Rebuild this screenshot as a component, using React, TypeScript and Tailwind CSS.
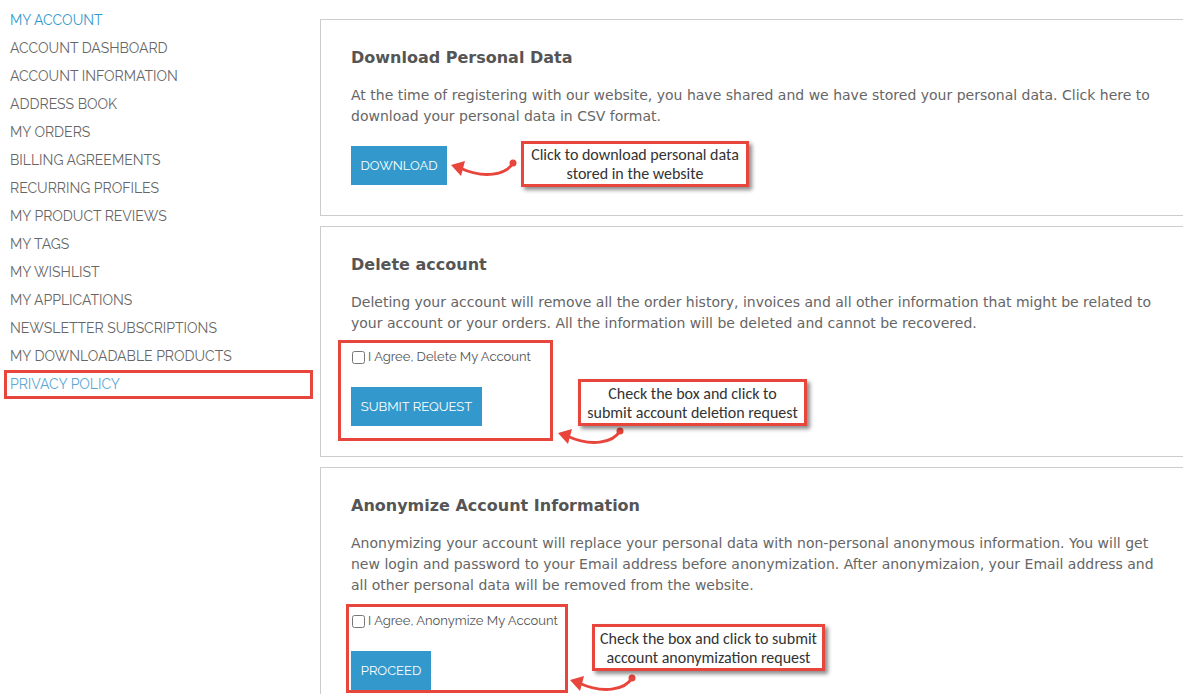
import { ReactNode } from "react";

const NAV = [
  "ACCOUNT DASHBOARD",
  "ACCOUNT INFORMATION",
  "ADDRESS BOOK",
  "MY ORDERS",
  "BILLING AGREEMENTS",
  "RECURRING PROFILES",
  "MY PRODUCT REVIEWS",
  "MY TAGS",
  "MY WISHLIST",
  "MY APPLICATIONS",
  "NEWSLETTER SUBSCRIPTIONS",
  "MY DOWNLOADABLE PRODUCTS",
];

const raleway = "font-['Raleway','Lato','Open_Sans',sans-serif]";
const verdana = "font-['Verdana','DejaVu_Sans',sans-serif]";
const calibri = "font-['Calibri','Carlito','Lato',sans-serif]";

// red annotation arrow: dot on the right, head on the left
function Arrow({ className }: { className: string }) {
  return (
    <svg className={`absolute ${className}`} width="72" height="28" viewBox="0 0 72 28" fill="none">
      <path d="M65 8 C 58 20, 36 24, 12 13" stroke="#e8463c" strokeWidth="3" strokeLinecap="round" />
      <circle cx="65" cy="8" r="3.5" fill="#e8463c" />
      <polygon points="3,10 17,6 13,21" fill="#e8463c" />
    </svg>
  );
}

function Callout({ className, children }: { className: string; children: ReactNode }) {
  return (
    <div
      className={`absolute flex items-center justify-center border-[3px] border-[#e8463c] bg-white text-center text-[16px] leading-[19px] font-normal text-[#333] shadow-[3px_3px_4px_rgba(0,0,0,0.45)] ${calibri} ${className}`}
    >
      {children}
    </div>
  );
}

function Card({ title, children }: { title: string; children: ReactNode }) {
  return (
    <section className="relative border-y border-l border-[#cccccc] bg-white pl-[30px] pr-6 pt-[26px] pb-[30px]">
      <h2 className={`${verdana} text-[16px] leading-6 font-bold text-[#555]`}>{title}</h2>
      {children}
    </section>
  );
}

function Para({ children }: { children: ReactNode }) {
  return <p className={`${verdana} mt-[15px] text-[14px] leading-[21px] text-[#666]`}>{children}</p>;
}

function BlueButton({ label, w }: { label: string; w: string }) {
  return (
    <button type="button" className={`${raleway} ${w} h-[39px] bg-[#3399cc] text-[13px] text-white`}>
      {label}
    </button>
  );
}

function AgreeForm({ label, button, w, top, gap }: { label: string; button: string; w: string; top: string; gap: string }) {
  return (
    <div className={`flex flex-col items-start ${top} ${gap}`}>
      <label className={`${raleway} flex h-5 items-center gap-[3px] text-[13px] text-[#555]`}>
        <input type="checkbox" className="ml-[1px] h-[13px] w-[13px] accent-[#888]" />
        {label}
      </label>
      <BlueButton label={button} w={w} />
    </div>
  );
}

export default function App() {
  return (
    <div className="flex min-h-[694px] w-[1183px] overflow-hidden bg-white">
      <aside className="relative w-[320px] shrink-0 pl-[10px] pt-[6px]">
        <nav className={`${raleway} text-[14px] leading-[28px] text-[#666]`}>
          <div className="text-[#3399cc]">MY ACCOUNT</div>
          {NAV.map((n) => (
            <div key={n}>{n}</div>
          ))}
          <div className="relative text-[#5aa6d6]">
            PRIVACY POLICY
            <div className="absolute left-[-6px] top-0 h-[29px] w-[309px] border-[3px] border-[#e8463c]" />
          </div>
        </nav>
      </aside>

      <main className="flex min-w-0 flex-1 flex-col gap-[10px] pt-[19px]">
        <Card title="Download Personal Data">
          <Para>
            At the time of registering with our website, you have shared and we have stored your personal data. Click here to
            download your personal data in CSV format.
          </Para>
          <div className="mt-[19px]">
            <BlueButton label="DOWNLOAD" w="w-[96px]" />
          </div>
          <Arrow className="left-[127px] top-[135px]" />
          <Callout className="left-[200px] top-[121px] h-[46px] w-[228px]">
            Click to download personal data
            <br />
            stored in the website
          </Callout>
        </Card>

        <Card title="Delete account">
          <Para>
            Deleting your account will remove all the order history, invoices and all other information that might be related to
            your account or your orders. All the information will be deleted and cannot be recovered.
          </Para>
          <AgreeForm label="I Agree, Delete My Account" button="SUBMIT REQUEST" w="w-[131px]" top="mt-[13px]" gap="gap-[20px]" />
          <div className="absolute left-[17px] top-[113px] h-[101px] w-[215px] border-[3px] border-[#e8463c]" />
          <Arrow className="left-[234px] top-[196px]" />
          <Callout className="left-[257px] top-[152px] h-[47px] w-[229px]">
            Check the box and click to
            <br />
            submit account deletion request
          </Callout>
        </Card>

        <Card title="Anonymize Account Information">
          <Para>
            Anonymizing your account will replace your personal data with non-personal anonymous information. You will get new
            login and password to your Email address before anonymization. After anonymizaion, your Email address and all other
            personal data will be removed from the website.
          </Para>
          <AgreeForm label="I Agree, Anonymize My Account" button="PROCEED" w="w-[80px]" top="mt-[15px]" gap="gap-[20px]" />
          <div className="absolute left-[25px] top-[136px] h-[89px] w-[222px] border-[3px] border-[#e8463c]" />
          <Arrow className="left-[246px] top-[202px]" />
          <Callout className="left-[271px] top-[156px] h-[47px] w-[233px]">
            Check the box and click to submit
            <br />
            account anonymization request
          </Callout>
        </Card>
      </main>
    </div>
  );
}
